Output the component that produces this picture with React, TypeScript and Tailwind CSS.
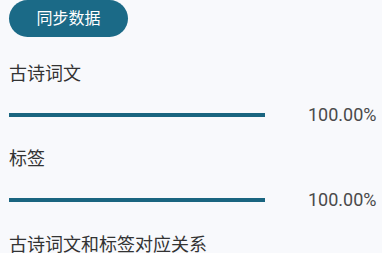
export default function App() {
    const rows = [
        { name: "古诗词文", percent: "100.00%" },
        { name: "标签", percent: "100.00%" },
    ];

    return (
        <div className="w-[382px] h-[253px] overflow-hidden bg-[#f8f9fc] pl-[9px] font-['Roboto','Noto_Sans_CJK_SC',sans-serif]">
            <button className="w-[119px] h-[37px] rounded-full bg-[#1b6a87] text-white text-[16px] leading-none">
                同步数据
            </button>

            {rows.map((row, i) => (
                <div key={i} className={i === 0 ? "mt-[25px]" : "mt-[20px]"}>
                    <div className="text-[18px] leading-[24px] text-[#333]">{row.name}</div>
                    <div className="mt-[17px] flex items-center h-[24px]">
                        <div className="w-[256px] h-[4px] bg-[#1a6580]" />
                        <span className="ml-[43px] text-[18px] text-[#4a4a4a] leading-none">{row.percent}</span>
                    </div>
                </div>
            ))}

            <div className="mt-[21px] text-[18px] leading-[24px] text-[#333] whitespace-nowrap">
                古诗词文和标签对应关系
            </div>
        </div>
    );
}
